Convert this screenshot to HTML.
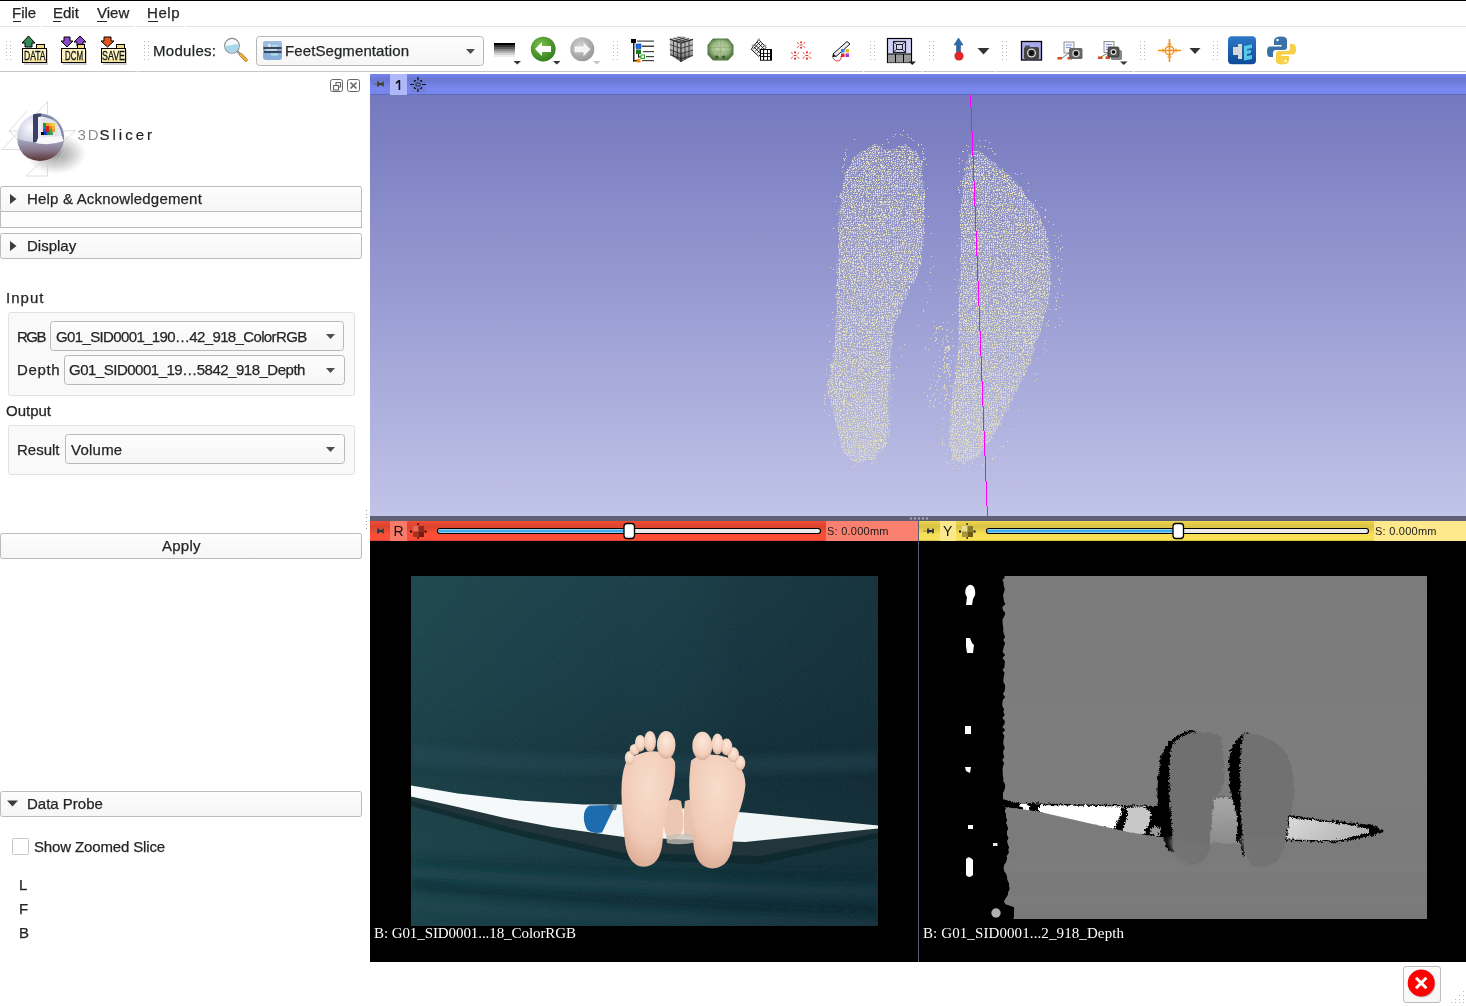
<!DOCTYPE html>
<html><head><meta charset="utf-8">
<style>
html,body{margin:0;padding:0;width:1466px;height:1006px;overflow:hidden;background:#ffffff;}
svg{position:absolute;left:0;top:0;display:block;will-change:transform}
.s{font-family:"Liberation Sans",sans-serif;font-size:15px;fill:#232627;stroke:#232627;stroke-width:0.25;white-space:pre}
.sr{font-family:"Liberation Serif",serif;font-size:15px;fill:#ffffff;white-space:pre}
</style></head>
<body>
<svg width="1466" height="1006" viewBox="0 0 1466 1006">
<defs>
  <linearGradient id="g3d" x1="0" y1="0" x2="0" y2="1">
    <stop offset="0" stop-color="#7478be"/><stop offset="1" stop-color="#c1c3e8"/>
  </linearGradient>
  <linearGradient id="gblue" x1="0" y1="0" x2="0" y2="1">
    <stop offset="0" stop-color="#7685f0"/><stop offset="0.25" stop-color="#6a77d2"/>
    <stop offset="0.7" stop-color="#7888ef"/><stop offset="0.93" stop-color="#7786ec"/>
    <stop offset="0.96" stop-color="#5e6bb8"/><stop offset="1" stop-color="#5e6bb8"/>
  </linearGradient>
  <linearGradient id="gred" x1="0" y1="0" x2="0" y2="1">
    <stop offset="0" stop-color="#f34a33"/><stop offset="0.3" stop-color="#d9442e"/>
    <stop offset="0.65" stop-color="#fc4e36"/><stop offset="0.93" stop-color="#fc4e36"/>
    <stop offset="0.96" stop-color="#d9452f"/><stop offset="1" stop-color="#d9452f"/>
  </linearGradient>
  <linearGradient id="gyel" x1="0" y1="0" x2="0" y2="1">
    <stop offset="0" stop-color="#eed64d"/><stop offset="0.3" stop-color="#d8c145"/>
    <stop offset="0.65" stop-color="#f7df56"/><stop offset="0.93" stop-color="#f7df56"/>
    <stop offset="0.96" stop-color="#d8c246"/><stop offset="1" stop-color="#d8c246"/>
  </linearGradient>
  <linearGradient id="gbtn" x1="0" y1="0" x2="0" y2="1">
    <stop offset="0" stop-color="#fdfdfd"/><stop offset="1" stop-color="#f6f6f6"/>
  </linearGradient>
  <pattern id="dots" width="2" height="2" patternUnits="userSpaceOnUse">
    <rect x="0" y="0" width="1" height="1" fill="#e2ddbb"/>
  </pattern>
</defs>

<!-- top black line -->
<rect x="0" y="0" width="1466" height="1" fill="#000"/>

<!-- MENU -->
<g id="menu">
  <text class="s" x="12" y="18">File</text>
  <text class="s" x="53" y="18">Edit</text>
  <text class="s" x="97" y="18">View</text>
  <text class="s" x="147" y="18" textLength="32.5">Help</text>
  <rect x="13" y="21" width="8" height="1" fill="#232627"/>
  <rect x="53" y="21" width="8" height="1" fill="#232627"/>
  <rect x="97" y="21" width="10" height="1" fill="#232627"/>
  <rect x="148" y="21" width="10" height="1" fill="#232627"/>
</g>
<rect x="0" y="26" width="40" height="1" fill="#e4e4e4"/><rect x="41" y="26" width="94" height="1" fill="#e4e4e4"/><rect x="136" y="26" width="48" height="1" fill="#e4e4e4"/><rect x="185" y="26" width="1281" height="1" fill="#e4e4e4"/>

<g id="toolbar">
  <!-- grips -->
  <g fill="#b4b4b4">
    <rect x="6" y="41" width="1" height="1"/><rect x="10" y="41" width="1" height="1"/>
    <rect x="6" y="45" width="1" height="1"/><rect x="10" y="45" width="1" height="1"/>
    <rect x="6" y="48" width="1" height="1"/><rect x="10" y="48" width="1" height="1"/>
    <rect x="6" y="52" width="1" height="1"/><rect x="10" y="52" width="1" height="1"/>
    <rect x="6" y="55" width="1" height="1"/><rect x="10" y="55" width="1" height="1"/>
    <rect x="6" y="59" width="1" height="1"/><rect x="10" y="59" width="1" height="1"/>
  </g>
  <g id="grip2" fill="#b4b4b4">
    <rect x="144" y="41" width="1" height="1"/><rect x="148" y="41" width="1" height="1"/>
    <rect x="144" y="45" width="1" height="1"/><rect x="148" y="45" width="1" height="1"/>
    <rect x="144" y="48" width="1" height="1"/><rect x="148" y="48" width="1" height="1"/>
    <rect x="144" y="52" width="1" height="1"/><rect x="148" y="52" width="1" height="1"/>
    <rect x="144" y="55" width="1" height="1"/><rect x="148" y="55" width="1" height="1"/>
    <rect x="144" y="59" width="1" height="1"/><rect x="148" y="59" width="1" height="1"/>
  </g>
  <use href="#grip2" x="469"/>
  <use href="#grip2" x="726"/>
  <use href="#grip2" x="785"/>
  <use href="#grip2" x="858"/>
  <use href="#grip2" x="996"/>
  <use href="#grip2" x="1069"/>

  <!-- DATA -->
  <g>
    <rect x="24" y="50" width="24" height="15" fill="#bdbdbd" opacity="0.7"/>
    <path d="M28.5 36 L35 43 L32 43 L32 47 L25 47 L25 43 L22 43 Z" fill="#2f8a55" stroke="#000" stroke-width="1"/>
    <rect x="36.5" y="44.5" width="8" height="4" fill="#f0dc88" stroke="#000"/>
    <rect x="22.5" y="48.5" width="24" height="14" fill="#fff5c4" stroke="#000"/>
    <rect x="23" y="59" width="23" height="3" fill="#f0e09a"/>
    <text x="24" y="60" style="font-family:'Liberation Sans';font-size:12px;fill:#111;stroke:#111;stroke-width:0.3" textLength="21.5" lengthAdjust="spacingAndGlyphs">DATA</text>
  </g>
  <!-- DCM -->
  <g>
    <rect x="63" y="50" width="24" height="15" fill="#bdbdbd" opacity="0.7"/>
    <path d="M67 47 L73 41 L70 41 L70 37 L64 37 L64 41 L61 41 Z" fill="#8a4ac8" stroke="#000"/>
    <path d="M80 36 L86 42 L83 42 L83 46 L77 46 L77 42 L74 42 Z" fill="#8a4ac8" stroke="#000"/>
    <rect x="77.5" y="44.5" width="7" height="4" fill="#f0dc88" stroke="#000"/>
    <rect x="61.5" y="48.5" width="24" height="14" fill="#fff5c4" stroke="#000"/>
    <rect x="62" y="59" width="23" height="3" fill="#f0e09a"/>
    <text x="65" y="60" style="font-family:'Liberation Sans';font-size:12px;fill:#111;stroke:#111;stroke-width:0.3" textLength="18" lengthAdjust="spacingAndGlyphs">DCM</text>
  </g>
  <!-- SAVE -->
  <g>
    <rect x="103" y="50" width="24" height="15" fill="#bdbdbd" opacity="0.7"/>
    <path d="M107.5 47 L114 41 L111 41 L111 37 L104 37 L104 41 L101 41 Z" fill="#e4561e" stroke="#000"/>
    <rect x="116.5" y="44.5" width="8" height="4" fill="#f0dc88" stroke="#000"/>
    <rect x="101.5" y="48.5" width="24" height="14" fill="#fff5c4" stroke="#000"/>
    <rect x="102" y="59" width="23" height="3" fill="#f0e09a"/>
    <text x="102" y="60" style="font-family:'Liberation Sans';font-size:12px;fill:#111;stroke:#111;stroke-width:0.3" textLength="23" lengthAdjust="spacingAndGlyphs">SAVE</text>
  </g>

  <text class="s" x="153" y="56" textLength="63">Modules:</text>

  <!-- magnifier -->
  <g>
    <path d="M240.5 54.5 L246 60" stroke="#b07820" stroke-width="3.4" stroke-linecap="round"/>
    <path d="M240.5 54.5 L246 60" stroke="#f4b040" stroke-width="2.2" stroke-linecap="round"/>
    <path d="M237 51 L240 54" stroke="#9a9a9a" stroke-width="2.4"/>
    <circle cx="232" cy="45.8" r="7.4" fill="#f4fbff" stroke="#8a8a8a" stroke-width="1.1"/>
    <path d="M225.2 46 L232 45 Q235 43.5 239 45 L238.8 47 Q238 51 232 53 Q226 52 225.2 46Z" fill="#a6d8ea"/>
  </g>
  <!-- modules combobox -->
  <rect x="256.5" y="36.5" width="227" height="29" rx="3" fill="url(#gbtn)" stroke="#b6b6b6"/>
  <rect x="263" y="41" width="19" height="19" rx="3" fill="#88aedb"/>
  <rect x="263" y="41" width="19" height="6" rx="3" fill="#9dbde2"/>
  <rect x="268.5" y="44" width="2" height="3" fill="#f0f4f8"/>
  <rect x="272" y="45" width="5.5" height="1.5" fill="#b8e4ea"/>
  <rect x="263.5" y="47" width="18" height="2" fill="#2a3444" opacity="0.85"/>
  <rect x="266" y="49.3" width="11" height="1.2" fill="#eef2f6"/>
  <rect x="264" y="51" width="17.5" height="2" fill="#2a3444" opacity="0.85"/>
  <rect x="271" y="53.5" width="7" height="2" fill="#b0e0e8"/>
  <text class="s" x="285" y="56" textLength="124">FeetSegmentation</text>
  <path d="M466 49 L475 49 L470.5 54 Z" fill="#4d4d4d"/>

  <!-- gradient/colors -->
  <g>
    <rect x="494" y="43" width="21" height="2" fill="#000"/>
    <rect x="494" y="45" width="21" height="2" fill="#333"/>
    <rect x="494" y="47" width="21" height="2" fill="#5a5a5a"/>
    <rect x="494" y="49" width="21" height="2" fill="#888"/>
    <rect x="494" y="51" width="21" height="2" fill="#b0b0b0"/>
    <rect x="494" y="53" width="21" height="2" fill="#d4d4d4"/>
    <rect x="494" y="55" width="21" height="2" fill="#ececec"/>
    <path d="M513.5 61 L521 61 L517.25 64.5Z" fill="#333"/>
  </g>
  <!-- back -->
  <defs>
    <radialGradient id="ggreen" cx="0.4" cy="0.35" r="0.7"><stop offset="0" stop-color="#7cc24a"/><stop offset="1" stop-color="#2f7a1c"/></radialGradient>
    <radialGradient id="ggray" cx="0.4" cy="0.35" r="0.7"><stop offset="0" stop-color="#d0d0d0"/><stop offset="1" stop-color="#959595"/></radialGradient>
  </defs>
  <circle cx="543.2" cy="49.1" r="12.4" fill="url(#ggreen)"/>
  <path d="M535 49 L542 42 L542 46 L551 46 L551 52 L542 52 L542 56 Z" fill="#fff"/>
  <path d="M553 61 L560.5 61 L556.75 64.5Z" fill="#333"/>
  <circle cx="582.3" cy="49.3" r="12" fill="url(#ggray)"/>
  <path d="M590.5 49.3 L583.5 42.3 L583.5 46.3 L574.5 46.3 L574.5 52.3 L583.5 52.3 L583.5 56.3 Z" fill="#f4f4f4"/>
  <path d="M593 61 L600.5 61 L596.75 64.5Z" fill="#c4c4c4"/>

  <!-- tree (data) -->
  <g>
    <rect x="631" y="39" width="5" height="4" fill="#000"/>
    <rect x="633" y="43" width="1.5" height="18.5" fill="#222"/>
    <rect x="633" y="60" width="4" height="1.5" fill="#222"/>
    <rect x="637" y="40.5" width="17" height="1.2" fill="#444"/>
    <rect x="636" y="44" width="5" height="4.5" fill="#1a6ee8" stroke="#0a3a9a" stroke-width="0.6"/>
    <rect x="642" y="45.5" width="12" height="1.5" fill="#444"/>
    <rect x="636" y="49.5" width="5" height="4.5" fill="#1e7a22"/>
    <rect x="643" y="51" width="11" height="1.2" fill="#444"/>
    <rect x="638" y="54" width="1.2" height="3.5" fill="#222"/>
    <rect x="638" y="56.5" width="3" height="1" fill="#222"/>
    <rect x="641" y="55" width="3.5" height="3.5" fill="#fff" stroke="#1cae1c" stroke-width="1"/>
    <rect x="646" y="56" width="8" height="1.2" fill="#444"/>
    <rect x="636.5" y="59" width="4" height="3.5" fill="#f08a1a"/>
    <rect x="642" y="60" width="12" height="1.2" fill="#444"/>
  </g>

  <!-- cube -->
  <defs>
    <linearGradient id="gcube" x1="0" y1="0" x2="0" y2="1"><stop offset="0" stop-color="#000" stop-opacity="0"/><stop offset="0.55" stop-color="#000" stop-opacity="0.1"/><stop offset="1" stop-color="#000" stop-opacity="0.55"/></linearGradient>
    <radialGradient id="gblob" cx="0.5" cy="0.45" r="0.55"><stop offset="0" stop-color="#c4d8b0"/><stop offset="0.6" stop-color="#a0bc88"/><stop offset="1" stop-color="#4e7440"/></radialGradient>
  </defs>
  <g>
    <path d="M681.3 36 L693 39.4 L693 55.5 L681 62 L670 54.7 L669.8 39.1 Z" fill="#c4c4c4"/>
    <path d="M669.8 39.1 L681 43 L693 39.4 M681 43 L681 62" stroke="#2a2a2a" stroke-width="1.2" fill="none"/>
    <g stroke="#3a3a3a" stroke-width="0.9" fill="none">
      <path d="M673.5 37.9 L685 41.8 M677.3 36.9 L689 40.6 M673.5 41.5 L685 37.6 M677.3 42.5 L689 38.6"/>
      <path d="M673.5 40.4 V56.5 M677.3 41.7 V59.2 M685 41.8 V59.8 M689 40.6 V57.6"/>
      <path d="M669.8 44.5 L681 48.4 L693 44.8 M669.8 49.8 L681 53.7 L693 50.1 M670 54.7 L681 58.6 L693 55.5"/>
    </g>
    <path d="M681.3 36 L693 39.4 L693 55.5 L681 62 L670 54.7 L669.8 39.1 Z" fill="url(#gcube)"/>
  </g>
  <!-- green blob (volume rendering) -->
  <g>
    <path d="M713 39 L728 39 L733 45 L733 54.5 L728 60 L713 60 L708 54.5 L708 45 Z" fill="url(#gblob)"/>
    <path d="M708.5 47.5 H732.5 M708.5 52 H732.5 M714 40 L727 59 M727 40 L714 59 M720.5 39.5 V59.5" stroke="#6e9258" stroke-width="0.6" opacity="0.6"/>
    <path d="M713 39 L728 39 L733 45 L733 54.5 L728 60 L713 60 L708 54.5 L708 45 Z" fill="none" stroke="#55793f" stroke-width="1"/>
    <ellipse cx="716.8" cy="57" rx="2" ry="1.6" fill="#3e5e30"/>
    <ellipse cx="723.6" cy="57" rx="2" ry="1.6" fill="#3e5e30"/>
  </g>
  <!-- grid (markups transform?) -->
  <g>
    <path d="M758.8 39.7 L766 47.4 L758.8 56.4 L751.2 49.3 Z" fill="#fff" stroke="#000" stroke-width="0.9"/>
    <path d="M755 44.5 L762.5 52 M757 42 L764.5 49.5 M754 47 L761 54 M762.5 43.5 L755 51.5 M764.5 45.5 L757 53.5 M760.5 41.5 L753 49.5" stroke="#000" stroke-width="0.8"/>
    <rect x="757.7" y="38.6" width="2.2" height="2.2" fill="#999"/>
    <rect x="751.8" y="44.6" width="2.2" height="2.2" fill="#999"/>
    <rect x="764" y="44.6" width="2.2" height="2.2" fill="#999"/>
    <rect x="760" y="49" width="12" height="11.7" fill="#000"/>
    <rect x="761" y="50" width="2" height="3" fill="#fff"/><rect x="764.1" y="50" width="2.9" height="3" fill="#fff"/><rect x="767.9" y="50" width="2.1" height="3" fill="#fff"/>
    <rect x="761" y="53.8" width="2" height="2.2" fill="#fff"/><rect x="764.1" y="53.8" width="2.9" height="2.2" fill="#fff"/><rect x="767.9" y="53.8" width="2.1" height="2.2" fill="#fff"/>
    <rect x="761" y="56.9" width="2" height="2.9" fill="#fff"/><rect x="764.1" y="56.9" width="2.9" height="2.9" fill="#fff"/><rect x="767.9" y="56.9" width="2.1" height="2.9" fill="#fff"/>
  </g>
  <!-- red asterisks -->
  <g><rect x="800.2" y="41.49" width="1.8" height="1.62" fill="#e8200e"/><rect x="800.2" y="46.8" width="1.8" height="1.71" fill="#e8200e"/><rect x="799.7" y="44.5" width="2.8" height="0.9" fill="#e8200e"/><path d="M797.1 42.39 L798.8 43.65 M805.1 42.39 L803.4 43.65 M797.1 47.7 L798.8 45.9 M805.1 47.7 L803.4 45.9" stroke="#e8200e" stroke-width="0.9" fill="none"/><rect x="794.2" y="51.405" width="1.8" height="1.8900000000000001" fill="#e8200e"/><rect x="794.2" y="57.6" width="1.8" height="1.9949999999999999" fill="#e8200e"/><rect x="793.7" y="55.0" width="2.8" height="0.9" fill="#e8200e"/><path d="M791.1 52.455 L792.8 53.925 M799.1 52.455 L797.4 53.925 M791.1 58.65 L792.8 56.55 M799.1 58.65 L797.4 56.55" stroke="#e8200e" stroke-width="0.9" fill="none"/><rect x="806.0" y="51.405" width="1.8" height="1.8900000000000001" fill="#e8200e"/><rect x="806.0" y="57.6" width="1.8" height="1.9949999999999999" fill="#e8200e"/><rect x="805.5" y="55.0" width="2.8" height="0.9" fill="#e8200e"/><path d="M802.9 52.455 L804.5999999999999 53.925 M810.9 52.455 L809.1999999999999 53.925 M802.9 58.65 L804.5999999999999 56.55 M810.9 58.65 L809.1999999999999 56.55" stroke="#e8200e" stroke-width="0.9" fill="none"/></g>
  <!-- pen / segment editor -->
  <g>
    <path d="M833 54 L847 41.5 L850 44 L836 56.5 Z" fill="#f0f0f0" stroke="#111" stroke-width="1"/>
    <path d="M833 54 L832 57.5 L836 56.5" fill="#111"/>
    <rect x="841" y="49" width="3.5" height="3.5" fill="#2080f0"/>
    <rect x="845.5" y="49" width="3.5" height="3.5" fill="#f0b020"/>
    <rect x="841" y="53.5" width="3.5" height="3.5" fill="#e82020"/>
    <rect x="845.5" y="53.5" width="3.5" height="3.5" fill="#b030d0"/>
    <path d="M833 58 Q835 62 839 61 Q842 59 841 56" fill="none" stroke="#e02040" stroke-width="0.9"/>
  </g>

  <!-- layout -->
  <g>
    <rect x="887.5" y="38.5" width="24" height="24" fill="#d2d2f8" stroke="#000" stroke-width="1.2"/>
    <rect x="888" y="54" width="23" height="8.5" fill="#999"/>
    <path d="M895.5 54 V62.5 M903.5 54 V62.5 M887.5 54 H911.5" stroke="#000" stroke-width="1"/>
    <rect x="893.5" y="41.5" width="12" height="11" fill="none" stroke="#222" stroke-width="1.2"/>
    <rect x="896.5" y="44.5" width="6" height="5" fill="none" stroke="#222" stroke-width="1"/>
    <path d="M893.5 41.5 L896.5 44.5 M905.5 41.5 L902.5 44.5 M893.5 52.5 L896.5 49.5 M905.5 52.5 L902.5 49.5" stroke="#222" stroke-width="0.8"/>
    <path d="M908.5 61.5 L916 61.5 L912.25 65Z" fill="#222"/>
  </g>
  <!-- arrow sphere -->
  <g>
    <path d="M958.5 38 L963 45 L960.5 45 L960.5 53 L956.5 53 L956.5 45 L954 45 Z" fill="#2e6aa8" stroke="#1a4a80" stroke-width="0.5"/>
    <circle cx="959" cy="56" r="4.6" fill="#e02828"/>
    <path d="M977.5 48 L989.5 48 L983.5 54.5 Z" fill="#333"/>
  </g>
  <!-- screenshot -->
  <g>
    <rect x="1021.5" y="41.5" width="20" height="18.5" fill="#a8aaf0" stroke="#000" stroke-width="1.3"/>
    <rect x="1024" y="47" width="15" height="12" rx="1.5" fill="#444"/>
    <rect x="1025" y="45.5" width="5" height="2" fill="#555"/>
    <circle cx="1031.5" cy="53" r="4.5" fill="#ddd"/>
    <circle cx="1031.5" cy="53" r="3.2" fill="#222"/>
    <circle cx="1031.5" cy="53" r="1.5" fill="#000"/>
  </g>
  <!-- scene camera -->
  <g>
    <rect x="1064" y="42" width="10" height="11" fill="#f4f4f8" stroke="#777" stroke-width="0.8"/>
    <path d="M1066 45 H1072 M1066 47.5 H1071" stroke="#6a7ad8" stroke-width="0.8"/>
    <path d="M1069 53 L1062 58 M1069 53 L1070 58" stroke="#555" stroke-width="0.8"/>
    <rect x="1057.5" y="57" width="4.5" height="2.5" fill="#d84a1a"/>
    <rect x="1067.5" y="57" width="4.5" height="2.5" fill="#d84a1a"/>
    <rect x="1069" y="48" width="13.5" height="11" rx="1.5" fill="#666"/>
    <circle cx="1076" cy="53.5" r="3.8" fill="#ccc"/><circle cx="1076" cy="53.5" r="2.4" fill="#111"/>
  </g>
  <!-- scene views -->
  <g>
    <rect x="1104" y="41.5" width="10" height="11" fill="#f4f4f8" stroke="#777" stroke-width="0.8"/>
    <path d="M1106 44.5 H1112 M1106 47 H1111 M1106 49.5 H1112" stroke="#6a7ad8" stroke-width="0.8"/>
    <path d="M1109 52.5 L1101 57 M1109 52.5 L1107 57" stroke="#555" stroke-width="0.8"/>
    <rect x="1098" y="56.5" width="4.5" height="2.5" fill="#d84a1a"/>
    <rect x="1105.5" y="56.5" width="4.5" height="2.5" fill="#d84a1a"/>
    <rect x="1111" y="50" width="11" height="10" rx="1.5" fill="#888"/>
    <rect x="1108" y="47" width="11" height="10" rx="1.5" fill="#555" stroke="#222" stroke-width="0.6"/>
    <circle cx="1113.5" cy="52" r="3" fill="#ddd"/><circle cx="1113.5" cy="52" r="1.8" fill="#111"/>
    <path d="M1120 61.5 L1127.5 61.5 L1123.75 65Z" fill="#333"/>
  </g>
  <!-- crosshair -->
  <g stroke="#f0901a" fill="none">
    <path d="M1158 50.5 H1181 M1169.5 39 V62" stroke-width="1.6"/>
    <circle cx="1169.5" cy="50.5" r="4.3" stroke-width="1.4"/>
    <path d="M1163 48.5 V52.5 M1176 48.5 V52.5 M1167.5 44 H1171.5 M1167.5 57 H1171.5" stroke-width="1.2"/>
  </g>
  <path d="M1189.5 48 L1200.5 48 L1195 54Z" fill="#333"/>
  <!-- extension -->
  <defs><linearGradient id="gext" x1="0" y1="0" x2="0" y2="1"><stop offset="0" stop-color="#2c78c8"/><stop offset="1" stop-color="#0e4a98"/></linearGradient></defs>
  <g>
    <rect x="1228" y="36.3" width="28" height="28" rx="4" fill="url(#gext)"/>
    <path d="M1233 47 L1238 47 L1238 44 L1242 44 L1242 59 L1238 59 L1238 55 L1233 55 Z" fill="#d8d8d8"/>
    <path d="M1244 46 L1252 44.5 L1252 48 L1247 49 L1247 50.5 L1251 50 L1251 53 L1247 54 L1247 56 L1252 55 L1252 59 L1244 60.5 Z" fill="#58c8e8"/>
  </g>
  <!-- python -->
  <g>
    <path d="M1281 36.5 Q1274 36.5 1274 41 L1274 45 L1281.5 45 L1281.5 46.5 L1270 46.5 Q1267 46.5 1267 51.5 Q1267 57 1270 57 L1273 57 L1273 53 Q1273 50 1276 50 L1284 50 Q1287 50 1287 47 L1287 40 Q1287 36.5 1281 36.5Z" fill="#3a72a8"/>
    <circle cx="1277.5" cy="40" r="1.2" fill="#fff"/>
    <path d="M1282 64.5 Q1289 64.5 1289 60 L1289 56 L1281.5 56 L1281.5 54.5 L1293 54.5 Q1296 54.5 1296 49.5 Q1296 44 1293 44 L1290 44 L1290 48 Q1290 51 1287 51 L1279 51 Q1276 51 1276 54 L1276 61 Q1276 64.5 1282 64.5Z" fill="#f8d048"/>
    <circle cx="1285.5" cy="61" r="1.2" fill="#fff"/>
  </g>
</g>

<!-- TOOLBAR bottom line -->
<rect x="0" y="71" width="137" height="1" fill="#c6c6c6"/><rect x="138" y="71" width="725" height="1" fill="#c6c6c6"/><rect x="864" y="71" width="58" height="1" fill="#c6c6c6"/><rect x="923" y="71" width="72" height="1" fill="#c6c6c6"/><rect x="996" y="71" width="137" height="1" fill="#c6c6c6"/><rect x="1134" y="71" width="332" height="1" fill="#c6c6c6"/>

<!-- LEFT PANEL -->
<g id="left">
  <!-- undock/close -->
  <g fill="none" stroke="#666" stroke-width="1">
    <rect x="330.5" y="79.5" width="12" height="12" rx="2"/>
    <rect x="347.5" y="79.5" width="12" height="12" rx="2"/>
    <rect x="333.5" y="85.5" width="5" height="4.5" stroke-width="1.1"/>
    <path d="M336 85.5 V82.5 H340.5 V87 H338.5" stroke-width="1.1"/>
    <path d="M350.5 82.5 L356.5 88.5 M356.5 82.5 L350.5 88.5" stroke-width="1.6"/>
  </g>
  <!-- logo -->
  <defs>
    <radialGradient id="gsph" cx="0.3" cy="0.3" r="0.85"><stop offset="0" stop-color="#fafaff"/><stop offset="0.45" stop-color="#c4c6dc"/><stop offset="1" stop-color="#7a7a98"/></radialGradient>
    <linearGradient id="gsphb" x1="0" y1="0" x2="0" y2="1"><stop offset="0" stop-color="#a8a8c4"/><stop offset="0.5" stop-color="#8a7a8e"/><stop offset="1" stop-color="#5a3434"/></linearGradient>
    <radialGradient id="gshadow" cx="0.5" cy="0.5" r="0.5"><stop offset="0" stop-color="#000" stop-opacity="0.4"/><stop offset="1" stop-color="#000" stop-opacity="0"/></radialGradient>
  </defs>
  <g>
    <ellipse cx="56" cy="154" rx="30" ry="20" fill="url(#gshadow)"/>
    <g stroke="#cfcfcf" stroke-width="0.7" fill="none">
      <path d="M47.5 101.5 L47.5 176 M47.5 101.5 L2 149.5 L33 149.5 M75.5 130.5 L26 176 L47.5 176 M62 131 L75.5 130.5 M27 111 L9 131 L44 166 M9 131 L22 131 M54 168 L65 150"/>
    </g>
    <circle cx="40.6" cy="137" r="23.5" fill="url(#gsph)"/>
    <path d="M17.2 139 Q18 152 28 158 Q40 164 52 158 Q62 152 64 139 Q50 146 36 143 Q25 141 17.2 139Z" fill="url(#gsphb)"/>
    <path d="M33 114.5 Q37 113 41 113.6 L41 141.5 L33 142.5 Z" fill="#3c4068"/>
    <path d="M41 113.6 Q54 116 60 125 Q63.5 132 64 139 L41 141.5Z" fill="#7c86a8"/>
    <path d="M38 117 L38 140 L62 137.5 Q61 128 56 122 Q50 117.5 41 116.5Z" fill="#eceef4"/>
    <path d="M38 138 L62 136 L63.5 141 Q50 146 36 143Z" fill="#f8f8fb"/>
    <g stroke="#c8c8d0" stroke-width="0.4">
      <path d="M41 120 H58 M41 123 H58 M41 126 H59 M41 129 H60 M41 132 H61 M41 135 H61 M44 118 V137 M47 118 V137 M50 118 V137 M53 119 V137 M56 121 V137"/>
    </g>
    <g>
      <rect x="43" y="123" width="3" height="3" fill="#1a9a3a"/><rect x="46" y="123" width="3" height="3" fill="#e8a020"/><rect x="49" y="123" width="3" height="3" fill="#f0c030"/><rect x="52" y="123" width="3" height="3" fill="#f0d050"/>
      <rect x="43" y="126" width="3" height="3" fill="#1a8a8a"/><rect x="46" y="126" width="3" height="3" fill="#e02020"/><rect x="49" y="126" width="3" height="3" fill="#e88020"/><rect x="52" y="126" width="3" height="3" fill="#f0b030"/>
      <rect x="43" y="129" width="3" height="3" fill="#2050d0"/><rect x="46" y="129" width="3" height="3" fill="#d02020"/><rect x="49" y="129" width="3" height="3" fill="#40a040"/><rect x="52" y="129" width="3" height="3" fill="#e0a030"/>
      <rect x="41" y="132" width="3" height="3" fill="#000"/><rect x="44" y="132" width="3" height="3" fill="#1040c0"/><rect x="47" y="132" width="3" height="3" fill="#209040"/><rect x="50" y="132" width="3" height="3" fill="#40a060"/>
    </g>
    <text x="77.5" y="140.3" style="font-family:'Liberation Sans';font-size:15px;fill:#8e8e8e" textLength="21">3D</text>
    <text x="99.5" y="140.3" style="font-family:'Liberation Sans';font-size:15px;fill:#1e1e1e;stroke:#1e1e1e;stroke-width:0.2" textLength="52.5">Slicer</text>
  </g>

  <!-- collapsible buttons -->
  <g stroke="#bbbbbb" fill="url(#gbtn)">
    <rect x="0.5" y="186.5" width="361" height="25" rx="2"/>
    <rect x="0.5" y="211.5" width="361" height="16" fill="#fdfdfd"/>
    <rect x="0.5" y="233.5" width="361" height="25" rx="2"/>
  </g>
  <path d="M10 194 L16.5 199 L10 204 Z" fill="#3c3c3c"/>
  <text class="s" x="27" y="204" textLength="174.8">Help &amp; Acknowledgement</text>
  <path d="M10 241 L16.5 246 L10 251 Z" fill="#3c3c3c"/>
  <text class="s" x="27" y="251">Display</text>

  <text class="s" x="6" y="303" textLength="37.4">Input</text>
  <rect x="8.5" y="312.5" width="346" height="83" rx="2" fill="#f9f9f9" stroke="#e2e2e2"/>
  <text class="s" x="17" y="342" textLength="29.5">RGB</text>
  <rect x="50.5" y="321.5" width="293" height="29" rx="3" fill="url(#gbtn)" stroke="#b9b9b9"/>
  <text class="s" x="56" y="342" textLength="251.2">G01_SID0001_190…42_918_ColorRGB</text>
  <path d="M326 334 L335 334 L330.5 339 Z" fill="#4d4d4d"/>
  <text class="s" x="17" y="375" textLength="42.6">Depth</text>
  <rect x="64.5" y="355.5" width="280" height="29" rx="3" fill="url(#gbtn)" stroke="#b9b9b9"/>
  <text class="s" x="69" y="375" textLength="236.4">G01_SID0001_19…5842_918_Depth</text>
  <path d="M326 368 L335 368 L330.5 373 Z" fill="#4d4d4d"/>

  <text class="s" x="6" y="416">Output</text>
  <rect x="8.5" y="425.5" width="346" height="49" rx="2" fill="#f9f9f9" stroke="#e2e2e2"/>
  <text class="s" x="17" y="455">Result</text>
  <rect x="65.5" y="434.5" width="279" height="29" rx="3" fill="url(#gbtn)" stroke="#b9b9b9"/>
  <text class="s" x="71" y="455" textLength="51.2">Volume</text>
  <path d="M326 447 L335 447 L330.5 452 Z" fill="#4d4d4d"/>

  <rect x="0.5" y="533.5" width="361" height="25" rx="2" fill="url(#gbtn)" stroke="#bbbbbb"/>
  <text class="s" x="162" y="551" textLength="38.5">Apply</text>

  <!-- splitter grip -->
  <g fill="#9a9a9a">
    <rect x="366" y="510" width="1" height="1"/><rect x="366" y="514" width="1" height="1"/>
    <rect x="366" y="517" width="1" height="1"/><rect x="366" y="521" width="1" height="1"/>
    <rect x="366" y="524" width="1" height="1"/><rect x="366" y="528" width="1" height="1"/>
  </g>

  <rect x="0.5" y="791.5" width="361" height="25" rx="2" fill="url(#gbtn)" stroke="#bbbbbb"/>
  <path d="M7 800.5 L18 800.5 L12.5 806.5 Z" fill="#3c3c3c"/>
  <text class="s" x="27" y="809">Data Probe</text>
  <rect x="12.5" y="838.5" width="16" height="16" rx="0.8" fill="#ffffff" stroke="#c8c8c8"/>
  <text class="s" x="34" y="852" textLength="131.2">Show Zoomed Slice</text>
  <text class="s" x="19" y="890">L</text>
  <text class="s" x="19" y="914">F</text>
  <text class="s" x="19" y="938">B</text>

</g>

<!-- 3D VIEW -->
<g id="view3d">
  <rect x="370" y="74" width="1096" height="21" fill="url(#gblue)"/>
  <rect x="370" y="95" width="1096" height="421" fill="url(#g3d)"/>
</g>

<!-- splitter -->
<rect x="370" y="516" width="1096" height="5" fill="#5f6074"/>

<!-- SLICE RED -->
<g id="red">
  <rect x="370" y="521" width="548" height="20" fill="url(#gred)"/>
  <rect x="370" y="541" width="548" height="421" fill="#000"/>
</g>
<rect x="918" y="521" width="1" height="441" fill="#5c5c70"/>
<!-- SLICE YELLOW -->
<g id="yellow">
  <rect x="919" y="521" width="547" height="20" fill="url(#gyel)"/>
  <rect x="919" y="541" width="547" height="421" fill="#000"/>
</g>

<g id="images">
<defs>
  <clipPath id="clipPhoto"><rect x="411" y="576" width="467" height="350"/></clipPath>
  <filter id="soft" x="-5%" y="-5%" width="110%" height="110%"><feGaussianBlur stdDeviation="0.7"/></filter>
  <filter id="soft2" x="-20%" y="-20%" width="140%" height="140%"><feGaussianBlur stdDeviation="4"/></filter>
  <filter id="grain" x="0" y="0" width="100%" height="100%">
    <feTurbulence type="fractalNoise" baseFrequency="0.9" numOctaves="1" seed="3" result="n"/>
    <feColorMatrix in="n" type="matrix" values="0 0 0 0 0.2  0 0 0 0 0.4  0 0 0 0 0.5  0 0 0 1.2 -0.45" result="c"/>
    <feComposite in="c" in2="SourceGraphic" operator="in"/>
  </filter>
  <radialGradient id="gskinL" cx="0.5" cy="0.3" r="0.75"><stop offset="0" stop-color="#f8dccc"/><stop offset="0.65" stop-color="#f0cab6"/><stop offset="1" stop-color="#daa892"/></radialGradient>
  <radialGradient id="gtoe" cx="0.5" cy="0.35" r="0.65"><stop offset="0" stop-color="#fde8dc"/><stop offset="0.7" stop-color="#f2d0bc"/><stop offset="1" stop-color="#dcae98"/></radialGradient>
  <linearGradient id="gfabh" x1="0" y1="0" x2="1" y2="0">
    <stop offset="0" stop-color="#2a6662" stop-opacity="0.25"/><stop offset="0.45" stop-color="#2a6662" stop-opacity="0.05"/><stop offset="0.7" stop-color="#0a1a22" stop-opacity="0.15"/><stop offset="1" stop-color="#0a1a22" stop-opacity="0.3"/>
  </linearGradient>
  <linearGradient id="gfab" x1="0" y1="0" x2="0" y2="1">
    <stop offset="0" stop-color="#1b3d47"/><stop offset="0.3" stop-color="#183843"/><stop offset="0.55" stop-color="#15313b"/><stop offset="0.75" stop-color="#173740"/><stop offset="1" stop-color="#16353f"/>
  </linearGradient>
  <linearGradient id="gpaper" x1="0" y1="0" x2="1" y2="0"><stop offset="0" stop-color="#f6fafb"/><stop offset="1" stop-color="#eef3f4"/></linearGradient>
</defs>
<g clip-path="url(#clipPhoto)">
  <rect x="411" y="576" width="467" height="350" fill="url(#gfab)"/>
  <rect x="411" y="576" width="467" height="350" fill="url(#gfabh)"/>
  <g filter="url(#soft2)">
    <path d="M411 745 Q600 765 878 752 L878 770 Q600 780 411 765Z" fill="#24505e" opacity="0.35"/>
    <path d="M411 858 Q560 866 878 872 L878 882 Q560 876 411 867Z" fill="#0c2029" opacity="0.4"/>
    <path d="M411 878 Q560 895 878 905 L878 915 Q560 905 411 889Z" fill="#0c2029" opacity="0.5"/>
    <path d="M411 866 Q560 880 878 888 L878 896 Q560 888 411 876Z" fill="#245060" opacity="0.3"/>
    <path d="M411 900 Q560 912 878 920 L878 930 Q560 922 411 910Z" fill="#245060" opacity="0.25"/>
  </g>
  <rect x="411" y="576" width="467" height="350" fill="#fff" filter="url(#grain)" opacity="0.16"/>
  <!-- dark fold below paper -->
  <path d="M411 797 L458 807 L505 818 L552 827 L588 832 L624 837 L745 842 L878 829 L878 833 L760 856 L624 853 L520 830 L411 801 Z" fill="#22363a" filter="url(#soft)"/>
  <path d="M411 801 L520 830 L624 853 L760 856 L878 833 L878 838 L760 864 L624 860 L520 836 L411 806 Z" fill="#0f2529" opacity="0.7" filter="url(#soft)"/>
  <!-- paper -->
  <path d="M411 785.5 L458 793.5 L520 800.5 L583 804.5 L624 804.5 L745 812.5 L878 825.5 L878 828.5 L745 842 L624 837 L588 832 L552 827 L505 818 L458 807 L411 796.5 Z" fill="url(#gpaper)" filter="url(#soft)"/>
  <!-- blue cylinder -->
  <path d="M590 805.5 L613 805 Q614.5 808 611 814 L602 832.5 Q592 834 587 829.5 Q583 822 584 814 Q585.5 807 590 805.5Z" fill="#1c6cae" filter="url(#soft)"/>
  <path d="M608 804.5 Q613 803 617 805 L616 810 Q612 811 609 809Z" fill="#3a5a6a" opacity="0.8" filter="url(#soft)"/>
  <!-- legs behind -->
  <path d="M664 804 Q672 797 681 801 Q684 815 683 830 Q680 838 670 840 Q663 835 664 820Z" fill="#ecc8b2" filter="url(#soft)"/>
  <path d="M685 801 Q694 797 701 803 Q699 820 697 836 Q690 840 684 835 Q683 815 685 801Z" fill="#e8c4ae" filter="url(#soft)"/>
  <path d="M666 836 Q680 832 696 835 L697 842 Q680 846 667 843Z" fill="#c8c0b8" opacity="0.75" filter="url(#soft)"/>
  <g filter="url(#soft)">
    <!-- left foot -->
    <path d="M625.4 764 Q628 757 640.7 753.5 Q650 750 660 752 Q672 755 675 762 Q676.5 780 669 800 Q663 822 662.7 840 Q661 866 643.5 866.8 Q627 866 624.5 838 Q622 815 621.5 795 Q621 776 625.4 764 Z" fill="url(#gskinL)"/>
    <ellipse cx="629.6" cy="758" rx="4.8" ry="7" fill="url(#gtoe)"/>
    <ellipse cx="634.7" cy="749.5" rx="5" ry="5.5" fill="url(#gtoe)"/>
    <ellipse cx="640.2" cy="743.3" rx="5.2" ry="8.4" fill="url(#gtoe)"/>
    <ellipse cx="650" cy="741.5" rx="6" ry="10.5" fill="url(#gtoe)"/>
    <ellipse cx="666.2" cy="745" rx="9.3" ry="14" fill="url(#gtoe)"/>
    <!-- right foot -->
    <path d="M691.3 760.2 Q700 754 707.5 754.5 Q718 754 726.6 757.3 Q735 761 739 766.9 Q745 772 745.5 785 Q744 800 738 815 Q733 830 732.8 842 Q731 867 713 868.5 Q696 868 693.5 845 Q693 830 691 810 Q688 787 690 770 Q690.5 763 691.3 760.2 Z" fill="url(#gskinL)"/>
    <ellipse cx="740" cy="763" rx="5.3" ry="7.6" fill="url(#gtoe)"/>
    <ellipse cx="733.3" cy="754.7" rx="5.7" ry="7.4" fill="url(#gtoe)"/>
    <ellipse cx="726.6" cy="747" rx="5.7" ry="8.4" fill="url(#gtoe)"/>
    <ellipse cx="717.5" cy="744" rx="5.8" ry="10.5" fill="url(#gtoe)"/>
    <ellipse cx="702.3" cy="746" rx="10" ry="14.3" fill="url(#gtoe)"/>
  </g>
</g>

<!-- DEPTH IMAGE -->
<defs>
  <linearGradient id="gdepth" gradientUnits="userSpaceOnUse" x1="0" y1="576" x2="0" y2="919">
    <stop offset="0" stop-color="#7b7b7b"/><stop offset="0.6" stop-color="#7d7d7d"/><stop offset="1" stop-color="#797979"/>
  </linearGradient>
  <linearGradient id="gwstrip" x1="0" y1="0" x2="1" y2="0.3"><stop offset="0" stop-color="#dadada"/><stop offset="1" stop-color="#b4b4b4"/></linearGradient>
  <linearGradient id="gbetween" x1="0" y1="0" x2="0" y2="1"><stop offset="0" stop-color="#a8a8a8"/><stop offset="1" stop-color="#8c8c8c"/></linearGradient>
  <filter id="fblurfoot" x="-10%" y="-10%" width="120%" height="120%"><feGaussianBlur stdDeviation="2.5"/></filter>
  <filter id="ragd" x="-5%" y="-5%" width="110%" height="110%">
    <feTurbulence type="turbulence" baseFrequency="0.25" numOctaves="2" seed="11" result="t"/>
    <feDisplacementMap in="SourceGraphic" in2="t" scale="4" xChannelSelector="R" yChannelSelector="G"/>
  </filter>
  <clipPath id="clipDepth"><path d="M1427 576 L1427 919 L1013.7 919 L1014.0 916 L1014.1 913 L1014.4 910 L1014.0 907 L1005.2 904 L1004.3 901 L1006.1 898 L1008.0 895 L1008.4 892 L1009.9 889 L1009.2 886 L1009.0 883 L1007.6 880 L1007.2 877 L1006.4 874 L1004.3 871 L1003.7 868 L1004.2 865 L1006.4 862 L1007.1 859 L1006.8 856 L1009.0 853 L1008.6 850 L1009.1 847 L1007.9 844 L1007.3 841 L1008.8 838 L1007.2 835 L1006.9 832 L1008.2 829 L1007.6 826 L1006.2 823 L1007.3 820 L1006.1 817 L1006.1 814 L1004.9 811 L1006.1 808 L1003 805 L1003 802 L1003 799 L1003 796 L1003 793 L1004.4 790 L1005.2 787 L1005.0 784 L1003.2 781 L1003.4 778 L1002.8 775 L1002.7 772 L1002.5 769 L1003.2 766 L1004.1 763 L1002.3 760 L1004.3 757 L1003.3 754 L1003.2 751 L1004.8 748 L1003.7 745 L1003.2 742 L1003.7 739 L1004.4 736 L1002.5 733 L1005.2 730 L1002.4 727 L1004.5 724 L1004.8 721 L1002.4 718 L1004.7 715 L1003.4 712 L1004.0 709 L1002.3 706 L1002.4 703 L1002.8 700 L1005.2 697 L1002.9 694 L1004.6 691 L1005.1 688 L1005.1 685 L1003.3 682 L1003.4 679 L1003.9 676 L1004.6 673 L1002.6 670 L1004.5 667 L1004.7 664 L1004.9 661 L1002.4 658 L1005.1 655 L1002.6 652 L1003.3 649 L1004.1 646 L1005.1 643 L1003.3 640 L1005.1 637 L1003.9 634 L1003.2 631 L1003.3 628 L1002.8 625 L1002.5 622 L1002.7 619 L1004.4 616 L1005.3 613 L1002.8 610 L1002.4 607 L1005.3 604 L1003.9 601 L1003.5 598 L1003.0 595 L1004.1 592 L1004.8 589 L1003.7 586 L1003.6 583 L1002.5 580 L1005.0 577 L1004 576 Z"/></clipPath>
</defs>
<g>
  <g fill="#fff">
    <path d="M966 588 Q970 582 974 587 Q977 594 973 599 L972 605 L966 605 L967 597 Q964 593 966 588Z"/>
    <path d="M966 638 L970 638 L972 643 L974 645 L973 653 L967 653 L966 646 Z"/>
    <rect x="965" y="726" width="6" height="8"/>
    <path d="M965 767 L971 767 L970 773 L966 771Z"/>
    <rect x="968" y="825" width="5" height="4"/>
    <path d="M966 859 Q969 855 973 860 L973 875 Q969 879 966 875Z"/>
    <rect x="993" y="843" width="4.5" height="3" fill="#e8e8e8"/>
  </g>
  <circle cx="996" cy="913" r="4.7" fill="#b0b0b0"/>
  <g clip-path="url(#clipDepth)">
  <rect x="995" y="576" width="432" height="343" fill="url(#gdepth)"/>
  <g filter="url(#ragd)">
  <path d="M990 793 Q1008 801 1019 802 L1162 805 L1172 805 L1172 838 L1137 833 L1112 828 L1038 811 L990 805Z" fill="#000"/>
  <path d="M1019 803.5 Q1024 801 1028 805 Q1029 810 1025 810 Q1021 808 1019 803.5Z" fill="#fff"/>
  <path d="M1038 804 L1123 805.5 L1113 827.5 L1057 819 L1038 810Z" fill="#fff"/>
  <path d="M1126 807 Q1132 804 1145 806 Q1152 812 1149 820 L1143 833 L1123 832 Q1122 826 1126 817Z" fill="#c8c8c8"/>
  <circle cx="1154.5" cy="830" r="5" fill="#9a9a9a"/>
  </g>
  <path d="M990 805 L1038 811.5 L1112 828.5 L1137 834 L1172 838.5 L1172 919 L990 919Z" fill="url(#gdepth)"/>
  <g filter="url(#soft2)" opacity="0.3">
    <rect x="1003" y="862" width="424" height="10" fill="#858585"/>
    <rect x="1003" y="893" width="424" height="12" fill="#828282"/>
  </g>
  <g filter="url(#ragd)">
    <path d="M1190 729 Q1168 734 1160 755 Q1155 780 1157 805 Q1158 830 1166 848 L1173 852 Q1169 820 1169 790 Q1168 760 1175 745 Q1182 736 1200 732Z" fill="#000"/>
    <path d="M1208 799 Q1226 794 1238 801 L1241 842 L1207 842Z" fill="url(#gbetween)"/>
    <path d="M1210 798 Q1222 793 1232 797 L1238 812 L1235 840 L1241 842 L1236 800 Q1226 792 1210 798Z" fill="#000"/>
    <path d="M1186.7 732 Q1208 729 1220 735.3 Q1223 754 1223.3 776 Q1222 790 1213 798.4 Q1210 822 1208 849.6 Q1203 862 1189 863.2 Q1178 857 1172 839 Q1169 805 1168 776 Q1168 752 1171 745 Q1177 736 1186.7 732Z" fill="#6f6f6f"/>
    <path d="M1246 731 Q1230 738 1228 760 Q1227 790 1233 806 Q1238 815 1237 835 L1243 858 L1243 825 Q1240 795 1240 765 Q1241 742 1252 734Z" fill="#000"/>
    <path d="M1243 732.8 Q1261 731 1279.6 745.6 Q1292 758 1293.2 788 Q1291 815 1289 815.5 L1284.7 836 Q1281 852 1276 860 Q1268 866 1252 865 Q1244 857 1241 830 Q1239 800 1239 765 Q1239 742 1243 732.8Z" fill="#717171"/>
    <path d="M1288 814 L1320.5 818.5 L1354.6 822 L1371.7 824.5 L1383.5 830.8 L1371.7 834.6 L1337.6 841.6 L1312 840.6 L1284.7 840 Z" fill="#000"/>
    <path d="M1289 816.5 L1320 820 L1352 824.5 L1366 827 L1370 831 L1356 834.5 L1337 839.5 L1312 839 L1285.5 838.5 Z" fill="url(#gwstrip)"/>
  </g>
  <path d="M1168 838 Q1175 862 1190 866 Q1205 864 1209 845 Z M1240 838 Q1248 866 1262 868 Q1278 864 1285 838Z" fill="#737373" filter="url(#fblurfoot)"/>
  </g>
</g>

<!-- 3D point clouds -->
<defs>
  <pattern id="dots2" width="2" height="2" patternUnits="userSpaceOnUse">
    <rect x="0" y="0" width="1" height="1" fill="#e4dfbc"/>
    <rect x="1" y="0" width="1" height="1" fill="#e4dfbc" opacity="0.3"/>
    <rect x="0" y="1" width="1" height="1" fill="#e4dfbc" opacity="0.3"/>
  </pattern>
  <filter id="rag" x="-10%" y="-10%" width="120%" height="120%">
    <feTurbulence type="turbulence" baseFrequency="0.12" numOctaves="2" seed="7" result="t"/>
    <feDisplacementMap in="SourceGraphic" in2="t" scale="4" xChannelSelector="R" yChannelSelector="G"/>
  </filter>
</defs>
<g filter="url(#rag)">
  <path d="M855.2 154.5 L872.6 144 L890 149.3 L903.8 144 L914.3 149.3 L921.2 159.8 L923 194.5 L923 229.3 L921.2 257 L914.3 278 L900.4 305.7 L893.4 326.6 L890 351 L888.2 385.7 L888.2 420.5 L884.7 444.8 L872.6 458.7 L855.2 462.2 L841.3 451.7 L834.3 420.5 L826.5 389.2 L834.3 333.6 L836 281.4 L837.8 229.3 L839.5 194.5 L844.8 170.2 Z" fill="url(#dots2)"/>
  <path d="M969.8 149.4 L980.3 151.1 L994.2 163.3 L1011.6 177.2 L1025.6 194.7 L1036 208.6 L1044.7 229.5 L1050 253.9 L1050 281.7 L1046.5 306.1 L1037.7 334 L1029 361.9 L1015 389.7 L1001.2 417.6 L990.7 438.5 L976.8 455.9 L962.9 462.9 L952.4 459.4 L947.2 438.5 L950.7 403.6 L954.2 368.8 L957.6 334 L957.6 299.2 L959.4 264.3 L959.4 212.1 L962.9 170.3 Z" fill="url(#dots2)"/>
  <path d="M937 360h1v1h-1zM943 321h1v1h-1zM946 338h1v1h-1zM937 369h1v1h-1zM943 385h1v1h-1zM944 384h1v1h-1zM947 346h1v1h-1zM944 393h1v1h-1zM941 332h1v1h-1zM943 351h1v1h-1zM950 344h1v1h-1zM933 392h1v1h-1zM928 405h1v1h-1zM933 401h1v1h-1zM943 323h1v1h-1zM930 387h1v1h-1zM946 349h1v1h-1zM934 332h1v1h-1zM940 391h1v1h-1zM939 401h1v1h-1zM944 361h1v1h-1zM936 323h1v1h-1zM944 370h1v1h-1zM941 346h1v1h-1zM944 388h1v1h-1zM938 402h1v1h-1zM929 399h1v1h-1zM944 397h1v1h-1zM942 372h1v1h-1zM945 334h1v1h-1zM926 394h1v1h-1zM935 342h1v1h-1zM953 365h1v1h-1zM935 351h1v1h-1zM941 339h1v1h-1zM946 390h1v1h-1zM946 335h1v1h-1zM936 389h1v1h-1zM940 368h1v1h-1zM946 365h1v1h-1zM937 396h1v1h-1zM943 357h1v1h-1zM932 320h1v1h-1zM943 366h1v1h-1zM946 328h1v1h-1zM954 375h1v1h-1zM937 368h1v1h-1zM930 384h1v1h-1zM950 362h1v1h-1zM940 361h1v1h-1zM942 358h1v1h-1zM930 402h1v1h-1zM951 345h1v1h-1zM945 347h1v1h-1zM946 394h1v1h-1zM933 339h1v1h-1zM947 402h1v1h-1zM947 347h1v1h-1zM945 322h1v1h-1zM951 338h1v1h-1zM943 398h1v1h-1zM942 323h1v1h-1zM928 388h1v1h-1zM942 387h1v1h-1zM945 349h1v1h-1zM941 327h1v1h-1zM932 324h1v1h-1zM947 340h1v1h-1zM933 405h1v1h-1zM939 375h1v1h-1zM937 375h1v1h-1zM954 354h1v1h-1zM928 399h1v1h-1zM938 367h1v1h-1zM941 329h1v1h-1zM944 362h1v1h-1zM947 324h1v1h-1zM944 371h1v1h-1zM933 334h1v1h-1zM931 364h1v1h-1zM946 346h1v1h-1zM934 326h1v1h-1zM935 325h1v1h-1zM931 373h1v1h-1zM945 335h1v1h-1zM946 364h1v1h-1zM947 363h1v1h-1zM939 325h1v1h-1zM947 372h1v1h-1zM936 381h1v1h-1zM944 364h1v1h-1zM942 339h1v1h-1zM945 365h1v1h-1zM946 357h1v1h-1zM943 349h1v1h-1zM935 400h1v1h-1zM944 357h1v1h-1zM941 388h1v1h-1zM942 332h1v1h-1zM936 328h1v1h-1zM947 328h1v1h-1zM941 351h1v1h-1zM943 388h1v1h-1zM944 387h1v1h-1zM934 330h1v1h-1zM937 326h1v1h-1zM945 394h1v1h-1zM938 355h1v1h-1zM952 354h1v1h-1zM946 368h1v1h-1zM935 338h1v1h-1zM950 384h1v1h-1zM939 393h1v1h-1zM949 373h1v1h-1zM947 321h1v1h-1zM941 344h1v1h-1zM942 343h1v1h-1zM943 372h1v1h-1zM953 382h1v1h-1zM951 394h1v1h-1zM943 399h1v1h-1zM938 348h1v1h-1zM947 369h1v1h-1zM944 352h1v1h-1zM941 328h1v1h-1zM938 375h1v1h-1zM951 360h1v1h-1zM941 337h1v1h-1zM942 336h1v1h-1zM943 365h1v1h-1zM945 380h1v1h-1zM935 388h1v1h-1zM944 345h1v1h-1zM955 375h1v1h-1zM945 346h1v1h-1zM945 355h1v1h-1z" fill="#ddd8b6"/>
</g>
<path d="M951 371h1v1h-1zM845 158h1v1h-1zM842 464h1v1h-1zM1055 309h1v1h-1zM1044 343h1v1h-1zM921 144h1v1h-1zM1043 353h1v1h-1zM959 192h1v1h-1zM895 134h1v1h-1zM833 269h1v1h-1zM893 375h1v1h-1zM929 285h1v1h-1zM1000 446h1v1h-1zM1047 323h1v1h-1zM998 449h1v1h-1zM967 150h1v1h-1zM824 394h1v1h-1zM1055 327h1v1h-1zM908 137h1v1h-1zM935 399h1v1h-1zM923 309h1v1h-1zM824 403h1v1h-1zM942 441h1v1h-1zM1062 268h1v1h-1zM871 463h1v1h-1zM923 153h1v1h-1zM1028 190h1v1h-1zM853 466h1v1h-1zM825 395h1v1h-1zM1044 217h1v1h-1zM827 359h1v1h-1zM929 379h1v1h-1zM842 167h1v1h-1zM1003 447h1v1h-1zM985 140h1v1h-1zM1055 256h1v1h-1zM930 268h1v1h-1zM931 233h1v1h-1zM1056 246h1v1h-1zM930 387h1v1h-1zM835 445h1v1h-1zM944 395h1v1h-1zM890 424h1v1h-1zM984 461h1v1h-1zM1057 293h1v1h-1zM923 311h1v1h-1zM885 446h1v1h-1zM1017 174h1v1h-1zM836 196h1v1h-1zM826 369h1v1h-1zM933 266h1v1h-1zM942 443h1v1h-1zM926 282h1v1h-1zM1028 183h1v1h-1zM925 347h1v1h-1zM894 378h1v1h-1zM901 356h1v1h-1zM957 269h1v1h-1zM891 397h1v1h-1zM1061 235h1v1h-1zM1043 348h1v1h-1zM911 138h1v1h-1zM902 135h1v1h-1zM1055 258h1v1h-1zM994 154h1v1h-1zM935 385h1v1h-1zM951 332h1v1h-1zM830 341h1v1h-1zM893 379h1v1h-1zM1060 248h1v1h-1zM824 398h1v1h-1zM844 160h1v1h-1zM991 148h1v1h-1zM837 456h1v1h-1zM1035 374h1v1h-1zM1035 200h1v1h-1zM925 349h1v1h-1zM913 140h1v1h-1zM1055 297h1v1h-1zM983 464h1v1h-1zM959 171h1v1h-1zM892 389h1v1h-1zM1053 224h1v1h-1zM1055 242h1v1h-1zM829 415h1v1h-1zM1056 305h1v1h-1zM887 139h1v1h-1zM842 171h1v1h-1zM949 395h1v1h-1zM1021 173h1v1h-1zM930 272h1v1h-1zM947 462h1v1h-1zM962 151h1v1h-1zM1048 221h1v1h-1zM956 465h1v1h-1zM968 146h1v1h-1zM962 160h1v1h-1zM1062 247h1v1h-1zM942 429h1v1h-1zM1057 297h1v1h-1zM942 438h1v1h-1zM918 145h1v1h-1zM960 181h1v1h-1zM953 468h1v1h-1zM933 380h1v1h-1zM968 466h1v1h-1zM948 399h1v1h-1zM944 356h1v1h-1zM1037 373h1v1h-1zM949 370h1v1h-1zM952 314h1v1h-1zM935 362h1v1h-1zM893 374h1v1h-1zM825 404h1v1h-1zM1059 278h1v1h-1zM960 220h1v1h-1zM1062 295h1v1h-1zM930 338h1v1h-1zM885 443h1v1h-1zM844 164h1v1h-1zM992 151h1v1h-1zM889 434h1v1h-1zM1058 279h1v1h-1zM826 384h1v1h-1zM928 349h1v1h-1zM852 467h1v1h-1zM1056 300h1v1h-1zM1060 283h1v1h-1zM1003 446h1v1h-1zM932 395h1v1h-1zM836 214h1v1h-1zM1056 309h1v1h-1zM936 329h1v1h-1zM947 393h1v1h-1zM888 142h1v1h-1zM1045 217h1v1h-1zM976 145h1v1h-1zM1058 251h1v1h-1zM873 462h1v1h-1zM1059 280h1v1h-1zM949 463h1v1h-1zM1036 379h1v1h-1zM954 279h1v1h-1zM953 463h1v1h-1zM900 134h1v1h-1zM1013 429h1v1h-1zM1052 259h1v1h-1zM1018 410h1v1h-1zM944 406h1v1h-1zM945 404h1v1h-1zM1061 271h1v1h-1zM1046 325h1v1h-1zM923 148h1v1h-1zM843 158h1v1h-1zM947 450h1v1h-1zM923 157h1v1h-1zM832 319h1v1h-1zM830 267h1v1h-1zM1045 210h1v1h-1zM938 328h1v1h-1zM858 466h1v1h-1zM1054 286h1v1h-1zM952 330h1v1h-1zM1034 381h1v1h-1zM889 420h1v1h-1zM844 159h1v1h-1zM854 139h1v1h-1zM874 465h1v1h-1zM846 156h1v1h-1zM889 429h1v1h-1zM1058 265h1v1h-1zM918 325h1v1h-1zM942 444h1v1h-1zM963 467h1v1h-1zM966 145h1v1h-1zM943 418h1v1h-1zM949 367h1v1h-1zM829 341h1v1h-1zM904 344h1v1h-1zM949 376h1v1h-1zM922 151h1v1h-1zM972 463h1v1h-1zM832 312h1v1h-1zM946 453h1v1h-1zM1058 237h1v1h-1zM944 371h1v1h-1zM923 159h1v1h-1zM948 371h1v1h-1zM1045 340h1v1h-1zM1060 249h1v1h-1zM846 149h1v1h-1zM893 136h1v1h-1zM918 144h1v1h-1zM957 245h1v1h-1zM889 431h1v1h-1zM955 312h1v1h-1zM945 399h1v1h-1zM955 257h1v1h-1zM949 360h1v1h-1zM1059 241h1v1h-1zM992 459h1v1h-1zM959 163h1v1h-1zM922 153h1v1h-1zM907 134h1v1h-1zM882 144h1v1h-1zM832 433h1v1h-1zM1007 441h1v1h-1zM977 464h1v1h-1zM903 130h1v1h-1zM963 151h1v1h-1zM948 373h1v1h-1zM1054 235h1v1h-1zM946 339h1v1h-1zM1046 350h1v1h-1zM1015 173h1v1h-1zM1061 259h1v1h-1zM855 465h1v1h-1zM959 211h1v1h-1zM826 374h1v1h-1zM927 188h1v1h-1zM960 185h1v1h-1zM1059 307h1v1h-1zM958 468h1v1h-1zM983 467h1v1h-1zM845 152h1v1h-1zM949 380h1v1h-1zM959 238h1v1h-1zM1048 325h1v1h-1zM1059 325h1v1h-1zM1045 216h1v1h-1zM833 443h1v1h-1zM958 187h1v1h-1zM891 405h1v1h-1zM943 342h1v1h-1zM1037 358h1v1h-1zM949 355h1v1h-1zM959 158h1v1h-1zM946 377h1v1h-1zM941 326h1v1h-1zM928 216h1v1h-1zM926 164h1v1h-1zM896 367h1v1h-1zM948 350h1v1h-1zM845 154h1v1h-1zM1056 301h1v1h-1zM876 462h1v1h-1zM1045 209h1v1h-1zM843 166h1v1h-1zM1057 266h1v1h-1zM988 148h1v1h-1zM1059 318h1v1h-1zM888 436h1v1h-1zM825 398h1v1h-1zM948 368h1v1h-1zM924 392h1v1h-1zM835 201h1v1h-1zM946 462h1v1h-1zM995 153h1v1h-1zM944 444h1v1h-1zM958 189h1v1h-1zM827 325h1v1h-1zM930 289h1v1h-1zM927 302h1v1h-1zM833 228h1v1h-1zM925 158h1v1h-1zM981 465h1v1h-1zM951 360h1v1h-1zM980 146h1v1h-1zM1048 320h1v1h-1zM900 348h1v1h-1zM924 159h1v1h-1zM984 146h1v1h-1zM835 441h1v1h-1zM951 460h1v1h-1zM1049 309h1v1h-1zM1041 207h1v1h-1zM959 190h1v1h-1zM995 457h1v1h-1zM956 292h1v1h-1zM1058 257h1v1h-1zM939 379h1v1h-1zM931 256h1v1h-1zM944 409h1v1h-1zM824 401h1v1h-1zM992 458h1v1h-1zM884 452h1v1h-1zM1062 321h1v1h-1zM824 410h1v1h-1zM979 140h1v1h-1zM989 142h1v1h-1z" fill="#e0dbb8"/>
<g fill="#ff00ff">
    <rect x="970" y="95" width="1" height="12"/><rect x="971" y="107" width="1" height="24"/><rect x="972" y="131" width="1" height="25"/>
    <rect x="973" y="156" width="1" height="25"/><rect x="974" y="181" width="1" height="25"/><rect x="975" y="206" width="1" height="25"/>
    <rect x="976" y="231" width="1" height="25"/><rect x="977" y="256" width="1" height="25"/><rect x="978" y="281" width="1" height="25"/>
    <rect x="979" y="306" width="1" height="25"/><rect x="980" y="331" width="1" height="25"/><rect x="981" y="356" width="1" height="25"/>
    <rect x="982" y="381" width="1" height="25"/><rect x="983" y="406" width="1" height="25"/><rect x="984" y="431" width="1" height="25"/>
    <rect x="985" y="456" width="1" height="25"/><rect x="986" y="481" width="1" height="25"/><rect x="987" y="506" width="1" height="10"/>
</g>

</g>
<g id="viewwidgets">
  <!-- 3D header widgets -->
  <rect x="390" y="74" width="17" height="21" fill="#b0b8fa"/>
  <path d="M398.6 80 L400.2 80 L400.2 90 L398.6 90 L398.6 82.3 L396 84 L395.6 82.6 Z" fill="#111"/>
  <g>
    <path d="M373.5 84 L377 84" stroke="#5a5a40" stroke-width="0.8"/>
    <rect x="377" y="81.5" width="2.2" height="5" fill="#4a4a38"/>
    <rect x="378" y="83" width="4.5" height="2.2" fill="#3a3a30"/>
    <rect x="382" y="81.5" width="2" height="5" rx="0.8" fill="#4a4a38"/>
  </g>
  <g>
    <rect x="411" y="78" width="14" height="14" fill="#6a78c8" opacity="0.5"/>
    <path d="M410 84.5 H414 M422 84.5 H426 M418 77 V80.5 M418 88.5 V92" stroke="#111" stroke-width="1.2"/>
    <path d="M414.5 80.5 h1.5 M420 80.5 h1.5 M414.5 88.5 h1.5 M420 88.5 h1.5 M414.5 80.5 v1.5 M421.5 80.5 v1.5 M414.5 87 v1.5 M421.5 87 v1.5" stroke="#111" stroke-width="1.2"/>
    <rect x="416" y="83" width="4" height="3" fill="none" stroke="#222" stroke-width="0.8"/>
  </g>

  <!-- RED bar widgets -->
  <rect x="390" y="521" width="17" height="20" fill="#f87a69"/>
  <text x="393.5" y="536" style="font-family:'Liberation Sans';font-size:14px;fill:#111">R</text>
  <g>
    <path d="M373 531 L377 531" stroke="#777" stroke-width="0.8"/>
    <rect x="377" y="528.5" width="2.2" height="5" fill="#3a4448"/>
    <rect x="378" y="530" width="4.5" height="2.2" fill="#2a3438"/>
    <rect x="382" y="528.5" width="2" height="5" rx="0.8" fill="#3a4448"/>
  </g>
  <g>
    <rect x="413" y="526" width="5.5" height="5.5" fill="#e46a58"/>
    <rect x="418.5" y="526" width="5.5" height="5.5" fill="#8e2a1a"/>
    <rect x="413" y="531.5" width="5.5" height="5.5" fill="#a83420"/>
    <rect x="418.5" y="531.5" width="5.5" height="5.5" fill="#6e1e12"/>
    <rect x="410" y="530.5" width="2" height="2" fill="#111"/><rect x="424.5" y="530.5" width="2" height="2" fill="#111"/>
    <rect x="417.5" y="523" width="1.2" height="2" fill="#111"/><rect x="417.5" y="537" width="1.2" height="2" fill="#111"/>
    
  </g>
  <!-- red slider -->
  <rect x="437.5" y="528.5" width="383" height="5" rx="2.5" fill="#ececec" stroke="#000" stroke-width="1.2"/>
  <rect x="438.5" y="529.5" width="190" height="3" fill="#3daee9"/>
  <rect x="624" y="523.5" width="10.5" height="15" rx="3" fill="#fff" stroke="#000" stroke-width="1.3"/>
  <rect x="826" y="521" width="92" height="20" fill="#fb8070"/>
  <text x="827" y="535" style="font-family:'Liberation Sans';font-size:11px;fill:#1a1a1a" textLength="61.5">S: 0.000mm</text>

  <!-- YELLOW bar widgets -->
  <rect x="940" y="521" width="16" height="20" fill="#fbe88a"/>
  <text x="943" y="536" style="font-family:'Liberation Sans';font-size:14px;fill:#111">Y</text>
  <g>
    <path d="M923 531 L927 531" stroke="#777" stroke-width="0.8"/>
    <rect x="927" y="528.5" width="2.2" height="5" fill="#3a4448"/>
    <rect x="928" y="530" width="4.5" height="2.2" fill="#2a3438"/>
    <rect x="932" y="528.5" width="2" height="5" rx="0.8" fill="#3a4448"/>
  </g>
  <g>
    <rect x="962" y="526" width="5.5" height="5.5" fill="#e8dc9a"/>
    <rect x="967.5" y="526" width="5.5" height="5.5" fill="#8a7a28"/>
    <rect x="962" y="531.5" width="5.5" height="5.5" fill="#a89438"/>
    <rect x="967.5" y="531.5" width="5.5" height="5.5" fill="#6a5a18"/>
    <rect x="959" y="530.5" width="2" height="2" fill="#111"/><rect x="973.5" y="530.5" width="2" height="2" fill="#111"/>
    <rect x="966.5" y="523" width="1.2" height="2" fill="#111"/><rect x="966.5" y="537" width="1.2" height="2" fill="#111"/>
  </g>
  <rect x="986.5" y="528.5" width="382" height="5" rx="2.5" fill="#ececec" stroke="#000" stroke-width="1.2"/>
  <rect x="987.5" y="529.5" width="190" height="3" fill="#3daee9"/>
  <rect x="1173" y="523.5" width="10.5" height="15" rx="3" fill="#fff" stroke="#000" stroke-width="1.3"/>
  <rect x="1374" y="521" width="92" height="20" fill="#fde98c"/>
  <text x="1375" y="535" style="font-family:'Liberation Sans';font-size:11px;fill:#1a1a1a" textLength="61.5">S: 0.000mm</text>

  <!-- splitter grip dots -->
  <g fill="#a8a8b8">
    <rect x="910" y="517.5" width="2" height="2"/><rect x="914" y="517.5" width="2" height="2"/><rect x="918" y="517.5" width="2" height="2"/><rect x="922" y="517.5" width="2" height="2"/><rect x="926" y="517.5" width="2" height="2"/>
  </g>

  <!-- annotations -->
  <text class="sr" x="374" y="938" textLength="202">B: G01_SID0001...18_ColorRGB</text>
  <text class="sr" x="923" y="938" textLength="201">B: G01_SID0001...2_918_Depth</text>

  <!-- status bar close button -->
  <rect x="1403.5" y="966.5" width="37" height="36" rx="2.5" fill="url(#gbtn)" stroke="#bdbdbd"/>
  <circle cx="1422" cy="984" r="13.5" fill="#888" opacity="0.5"/>
  <circle cx="1421.2" cy="983" r="13.5" fill="#ff0000"/>
  <path d="M1416 977.8 L1426.4 988.2 M1426.4 977.8 L1416 988.2" stroke="#fff" stroke-width="3"/>
  <g fill="#b8b8b8">
    <rect x="1463" y="991" width="1" height="1"/><rect x="1459" y="995" width="1" height="1"/><rect x="1463" y="995" width="1" height="1"/>
    <rect x="1455" y="999" width="1" height="1"/><rect x="1459" y="999" width="1" height="1"/><rect x="1463" y="999" width="1" height="1"/>
    <rect x="1451" y="1002" width="1" height="1"/><rect x="1455" y="1002" width="1" height="1"/><rect x="1459" y="1002" width="1" height="1"/><rect x="1463" y="1002" width="1" height="1"/>
  </g>

</g>
</svg>
</body></html>
